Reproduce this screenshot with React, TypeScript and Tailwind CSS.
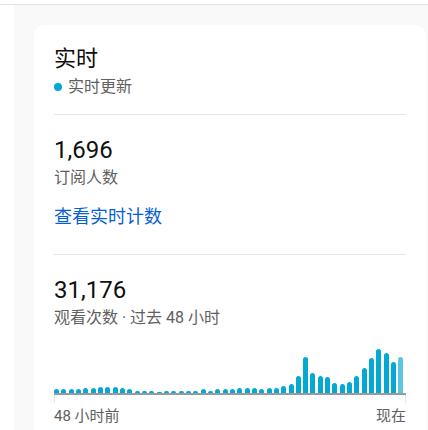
import React from "react";

// views per hour over the last 48 hours, bar heights in px (last one is the running hour)
const hourly = [
  3.7, 3.7, 3.7, 3.7, 5, 5, 6.3, 6.3, 6.3, 5, 3.7, 2.3, 2.3, 2.3, 1.3, 2.3,
  2.3, 2.3, 2.3, 2.3, 3.7, 2.3, 3.7, 3.7, 3.7, 5, 5, 5, 3.7, 5, 5, 7.5, 9,
  17.3, 36.3, 20, 17.5, 16.3, 10, 8.7, 11, 17.5, 25, 35, 43.7, 40, 31.3, 36,
];

const font = { fontFamily: '"Roboto", "Noto Sans CJK SC", sans-serif' };

function ViewsChart() {
  return (
    <div className="mt-[15px]">
      <div className="flex h-[48px] items-end">
        {hourly.map((h, i) => (
          <div key={i} className="flex flex-1 justify-start">
            <div
              className={`w-[5px] rounded-t-[2.5px] ${
                i === hourly.length - 1 ? "bg-[#5cc6e2]" : "bg-[#03a8d3]"
              }`}
              style={{ height: `${h}px` }}
            />
          </div>
        ))}
      </div>
      <div className="h-[2px] bg-[#9a9a9a]" />
      <div className="flex justify-between">
        <div className="h-[8px] w-px bg-[#e5e5e5]" />
        <div className="h-[8px] w-px bg-[#e5e5e5]" />
      </div>
      <div className="mt-[3px] flex justify-between text-[15px] leading-[20px] text-[#606060]">
        <span>48 小时前</span>
        <span>现在</span>
      </div>
    </div>
  );
}

export default function App() {
  return (
    <div className="h-[430px] overflow-hidden bg-white" style={font}>
      <div className="h-[5px] border-b border-[#e3e3e3] bg-white" />
      <div className="flex h-full">
        <div className="w-[14px] bg-white" />
        <div className="flex-1 bg-[#f9f9f9] pl-[20px] pr-[2px] pt-[20px]">
          <div className="rounded-[10px] bg-white px-5 pt-[20px] pb-6">
            <h2 className="text-[22px] leading-[28px] font-normal text-[#0f0f0f]">实时</h2>
            <div className="mt-[2px] flex items-center gap-[6px] text-[16px] leading-[24px] text-[#606060]">
              <span className="h-[8px] w-[8px] shrink-0 rounded-full bg-[#03a8d3]" />
              <span>实时更新</span>
            </div>

            <div className="mt-[15px] h-px bg-[#e5e5e5]" />

            <div className="mt-[19px] text-[24px] leading-[32px] text-[#0f0f0f]">1,696</div>
            <div className="text-[16px] leading-[24px] text-[#606060]">订阅人数</div>
            <a className="mt-[15px] block text-[18px] leading-[24px] text-[#065fd4]">查看实时计数</a>

            <div className="mt-[25px] h-px bg-[#e5e5e5]" />

            <div className="mt-[19px] text-[24px] leading-[32px] text-[#0f0f0f]">31,176</div>
            <div className="text-[16px] leading-[24px] text-[#606060]">观看次数 · 过去 48 小时</div>

            <ViewsChart />
          </div>
        </div>
      </div>
    </div>
  );
}
